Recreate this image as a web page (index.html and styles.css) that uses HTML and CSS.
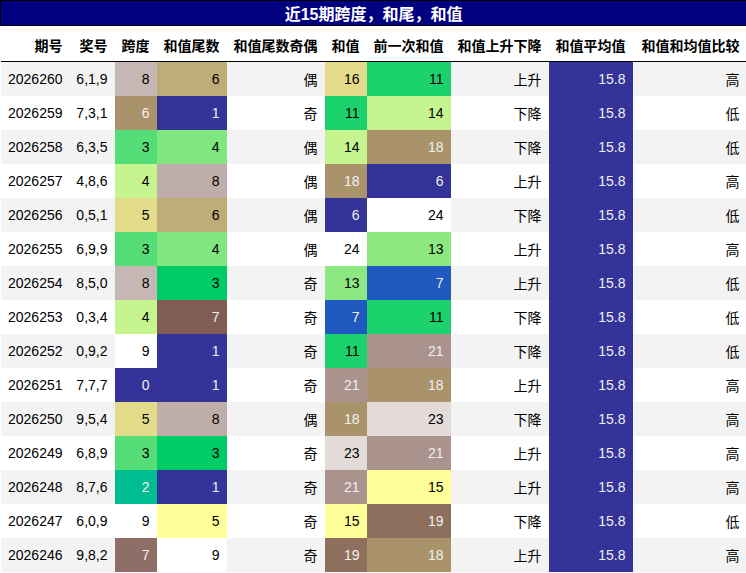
FILE: index.html
```html
<!DOCTYPE html>
<html lang="zh">
<head>
<meta charset="utf-8">
<title>近15期跨度，和尾，和值</title>
<link rel="stylesheet" href="styles.css">
</head>
<body>
<table class="tbl">
  <colgroup>
    <col class="w1"><col class="w2"><col class="w3"><col class="w4"><col class="w5">
    <col class="w6"><col class="w7"><col class="w8"><col class="w9"><col class="w10">
  </colgroup>
  <thead>
    <tr><th class="title" colspan="10">近15期跨度，和尾，和值</th></tr>
    <tr class="hdr">
      <th>期号</th><th>奖号</th><th>跨度</th><th>和值尾数</th><th>和值尾数奇偶</th>
      <th>和值</th><th>前一次和值</th><th>和值上升下降</th><th>和值平均值</th><th>和值和均值比较</th>
    </tr>
  </thead>
  <tbody>
    <tr class="odd"><td>2026260</td><td>6,1,9</td><td style="background:#c7b7b4">8</td><td style="background:#bfad77">6</td><td>偶</td><td style="background:#e3db8a">16</td><td style="background:#1cd26c">11</td><td>上升</td><td class="lt" style="background:#333399">15.8</td><td>高</td></tr>
    <tr><td>2026259</td><td>7,3,1</td><td class="lt" style="background:#aa926b">6</td><td class="lt" style="background:#333399">1</td><td>奇</td><td style="background:#1cd26c">11</td><td style="background:#c6f48e">14</td><td>下降</td><td class="lt" style="background:#333399">15.8</td><td>低</td></tr>
    <tr class="odd"><td>2026258</td><td>6,3,5</td><td style="background:#55dd77">3</td><td style="background:#80e680">4</td><td>偶</td><td style="background:#c6f48e">14</td><td class="lt" style="background:#aa926b">18</td><td>下降</td><td class="lt" style="background:#333399">15.8</td><td>低</td></tr>
    <tr><td>2026257</td><td>4,8,6</td><td style="background:#c6f48e">4</td><td style="background:#bfadaa">8</td><td>偶</td><td class="lt" style="background:#aa926b">18</td><td class="lt" style="background:#333399">6</td><td>上升</td><td class="lt" style="background:#333399">15.8</td><td>高</td></tr>
    <tr class="odd"><td>2026256</td><td>0,5,1</td><td style="background:#e3db8a">5</td><td style="background:#bfad77">6</td><td>偶</td><td class="lt" style="background:#333399">6</td><td style="background:#ffffff">24</td><td>下降</td><td class="lt" style="background:#333399">15.8</td><td>低</td></tr>
    <tr><td>2026255</td><td>6,9,9</td><td style="background:#55dd77">3</td><td style="background:#80e680">4</td><td>偶</td><td style="background:#ffffff">24</td><td style="background:#8ee882">13</td><td>上升</td><td class="lt" style="background:#333399">15.8</td><td>高</td></tr>
    <tr class="odd"><td>2026254</td><td>8,5,0</td><td style="background:#c7b7b4">8</td><td style="background:#00cc66">3</td><td>奇</td><td style="background:#8ee882">13</td><td class="lt" style="background:#2059bf">7</td><td>上升</td><td class="lt" style="background:#333399">15.8</td><td>低</td></tr>
    <tr><td>2026253</td><td>0,3,4</td><td style="background:#c6f48e">4</td><td class="lt" style="background:#805c54">7</td><td>奇</td><td class="lt" style="background:#2059bf">7</td><td style="background:#1cd26c">11</td><td>下降</td><td class="lt" style="background:#333399">15.8</td><td>低</td></tr>
    <tr class="odd"><td>2026252</td><td>0,9,2</td><td style="background:#ffffff">9</td><td class="lt" style="background:#333399">1</td><td>奇</td><td style="background:#1cd26c">11</td><td class="lt" style="background:#aa928d">21</td><td>下降</td><td class="lt" style="background:#333399">15.8</td><td>低</td></tr>
    <tr><td>2026251</td><td>7,7,7</td><td class="lt" style="background:#333399">0</td><td class="lt" style="background:#333399">1</td><td>奇</td><td class="lt" style="background:#aa928d">21</td><td class="lt" style="background:#aa926b">18</td><td>上升</td><td class="lt" style="background:#333399">15.8</td><td>高</td></tr>
    <tr class="odd"><td>2026250</td><td>9,5,4</td><td style="background:#e3db8a">5</td><td style="background:#bfadaa">8</td><td>偶</td><td class="lt" style="background:#aa926b">18</td><td style="background:#e3dbd9">23</td><td>下降</td><td class="lt" style="background:#333399">15.8</td><td>高</td></tr>
    <tr><td>2026249</td><td>6,8,9</td><td style="background:#55dd77">3</td><td style="background:#00cc66">3</td><td>奇</td><td style="background:#e3dbd9">23</td><td class="lt" style="background:#aa928d">21</td><td>上升</td><td class="lt" style="background:#333399">15.8</td><td>高</td></tr>
    <tr class="odd"><td>2026248</td><td>8,7,6</td><td class="lt" style="background:#00be91">2</td><td class="lt" style="background:#333399">1</td><td>奇</td><td class="lt" style="background:#aa928d">21</td><td style="background:#ffff99">15</td><td>上升</td><td class="lt" style="background:#333399">15.8</td><td>高</td></tr>
    <tr><td>2026247</td><td>6,0,9</td><td style="background:#ffffff">9</td><td style="background:#ffff99">5</td><td>奇</td><td style="background:#ffff99">15</td><td class="lt" style="background:#8e6e5c">19</td><td>下降</td><td class="lt" style="background:#333399">15.8</td><td>低</td></tr>
    <tr class="odd"><td>2026246</td><td>9,8,2</td><td class="lt" style="background:#8e6e67">7</td><td style="background:#ffffff">9</td><td>奇</td><td class="lt" style="background:#8e6e5c">19</td><td class="lt" style="background:#aa926b">18</td><td>上升</td><td class="lt" style="background:#333399">15.8</td><td>高</td></tr>
  </tbody>
</table>
</body>
</html>
```
FILE: styles.css
```css
html, body {
  margin: 0;
  padding: 0;
  background: #ffffff;
}
body {
  font-family: "Liberation Sans", "Noto Sans CJK SC", sans-serif;
  font-size: 14px;
  color: #000000;
}
.tbl {
  border-collapse: collapse;
  table-layout: fixed;
  width: 746px;
}
.w1 { width: 68px; }
.w2 { width: 46px; }
.w3 { width: 42px; }
.w4 { width: 70px; }
.w5 { width: 98px; }
.w6 { width: 42px; }
.w7 { width: 84px; }
.w8 { width: 98px; }
.w9 { width: 84px; }
.w10 { width: 114px; }
.title {
  background: #000080;
  color: #ffffff;
  font-size: 16px;
  font-weight: bold;
  text-align: center;
  border: 1px solid #000000;
  height: 24px;
  padding: 0;
}
.hdr th {
  font-size: 14px;
  font-weight: bold;
  text-align: right;
  padding: 2px 7px 0;
  height: 33px;
  border-bottom: 1px solid #000000;
  white-space: nowrap;
}
.hdr th:first-child,
tbody td:first-child {
  padding-right: 6px;
}
td {
  text-align: right;
  padding: 0 7px;
  height: 34px;
  white-space: nowrap;
}
tr.odd {
  background: #f3f3f3;
}
td.lt {
  color: #f1f1f1;
}
```
